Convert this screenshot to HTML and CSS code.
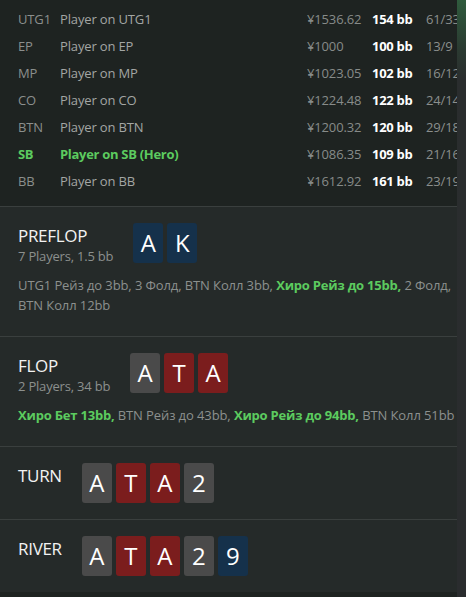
FILE: index.html
```html
<!DOCTYPE html>
<html lang="ru">
<head>
<meta charset="utf-8">
<link rel="stylesheet" href="styles.css">
</head>
<body>
<div class="frame">
  <main class="content">
    <section class="players">
      <div class="row"><span class="pos">UTG1</span><span class="name">Player on UTG1</span><span class="stack">¥1536.62</span><span class="bb">154 bb</span><span class="stat">61/33</span></div>
      <div class="row"><span class="pos">EP</span><span class="name">Player on EP</span><span class="stack">¥1000</span><span class="bb">100 bb</span><span class="stat">13/9</span></div>
      <div class="row"><span class="pos">MP</span><span class="name">Player on MP</span><span class="stack">¥1023.05</span><span class="bb">102 bb</span><span class="stat">16/12</span></div>
      <div class="row"><span class="pos">CO</span><span class="name">Player on CO</span><span class="stack">¥1224.48</span><span class="bb">122 bb</span><span class="stat">24/14</span></div>
      <div class="row"><span class="pos">BTN</span><span class="name">Player on BTN</span><span class="stack">¥1200.32</span><span class="bb">120 bb</span><span class="stat">29/18</span></div>
      <div class="row hero"><span class="pos">SB</span><span class="name">Player on SB (Hero)</span><span class="stack">¥1086.35</span><span class="bb">109 bb</span><span class="stat">21/16</span></div>
      <div class="row"><span class="pos">BB</span><span class="name">Player on BB</span><span class="stack">¥1612.92</span><span class="bb">161 bb</span><span class="stat">23/19</span></div>
    </section>

    <section class="street">
      <div class="head">
        <div class="title-block">
          <div class="title">PREFLOP</div>
          <div class="sub">7 Players, 1.5 bb</div>
        </div>
        <div class="cards">
          <span class="card blue">A</span><span class="card blue">K</span>
        </div>
      </div>
      <p class="actions">UTG1 Рейз до 3bb, 3 Фолд, BTN Колл 3bb, <b class="hl">Хиро Рейз до 15bb,</b> 2 Фолд, BTN Колл 12bb</p>
    </section>

    <section class="street">
      <div class="head">
        <div class="title-block">
          <div class="title">FLOP</div>
          <div class="sub">2 Players, 34 bb</div>
        </div>
        <div class="cards">
          <span class="card grey">A</span><span class="card red">T</span><span class="card red">A</span>
        </div>
      </div>
      <p class="actions nowrap"><b class="hl">Хиро Бет 13bb,</b> BTN Рейз до 43bb, <b class="hl">Хиро Рейз до 94bb,</b> BTN Колл 51bb</p>
    </section>

    <section class="street">
      <div class="head">
        <div class="title-block">
          <div class="title">TURN</div>
        </div>
        <div class="cards">
          <span class="card grey">A</span><span class="card red">T</span><span class="card red">A</span><span class="card grey">2</span>
        </div>
      </div>
    </section>

    <section class="street">
      <div class="head">
        <div class="title-block">
          <div class="title">RIVER</div>
        </div>
        <div class="cards">
          <span class="card grey">A</span><span class="card red">T</span><span class="card red">A</span><span class="card grey">2</span><span class="card blue">9</span>
        </div>
      </div>
    </section>
  </main>
  <div class="rail"></div>
</div>
</body>
</html>
```

FILE: styles.css
```css
* { box-sizing: border-box; }
html, body { margin: 0; padding: 0; }
body {
  background: #1e2321;
  font-family: "Open Sans", "Noto Sans", "DejaVu Sans", sans-serif;
  font-size: 13px;
  color: #8c908e;
  width: 466px;
  height: 597px;
  overflow: hidden;
}
.frame {
  display: flex;
  height: 597px;
}
.content {
  width: 457px;
  flex: none;
  overflow: hidden;
  height: 593px;
}
.rail {
  flex: 1;
  background: linear-gradient(to bottom, #2f5b3d 0px, #2b3a31 50px, #2a2d2e 80px, #2a2c2e 100%);
}
.players {
  background: #1e2321;
  padding: 5px 0 12px 18px;
  border-bottom: 1px solid #3a3f3e;
}
.row {
  display: grid;
  grid-template-columns: 42px 247px 65px 54px 60px;
  height: 27px;
  align-items: center;
  white-space: nowrap;
  letter-spacing: -0.15px;
}
.pos { color: #8b8f8d; }
.name { color: #a3a6a4; }
.stack { color: #878b89; }
.bb { color: #ffffff; font-weight: 700; letter-spacing: -0.3px; }
.stat { color: #8b8f8d; }
.row.hero .pos, .row.hero .name { color: #5ccb5f; font-weight: 700; letter-spacing: -0.3px; }

.street {
  background: #252a29;
  padding: 16px 0 16px 18px;
  border-bottom: 1px solid #3a3f3e;
}
.street:last-child { border-bottom: none; }
.head {
  display: flex;
  align-items: flex-start;
  gap: 20px;
}
.title-block {
  padding-top: 2px;
}
.title {
  color: #f2f2f2;
  font-size: 17px;
  line-height: 22px;
  letter-spacing: -0.3px;
}
.sub {
  font-size: 13px;
  line-height: 19px;
  color: #8c908e;
  letter-spacing: -0.2px;
}
.cards {
  display: flex;
  gap: 4px;
}
.card {
  width: 30px;
  height: 40px;
  border-radius: 3px;
  color: #ffffff;
  font-size: 24px;
  line-height: 40px;
  text-align: center;
}
.card.blue { background: #15314b; }
.card.red { background: #7b1d1d; }
.card.grey { background: #4a4a4a; }
.actions {
  margin: 9px 0 5px 0;
  line-height: 20px;
  padding-right: 4px;
  letter-spacing: -0.1px;
}
.actions.nowrap { white-space: nowrap; }
.hl { color: #5ccb5f; font-weight: 700; letter-spacing: -0.2px; }
```
